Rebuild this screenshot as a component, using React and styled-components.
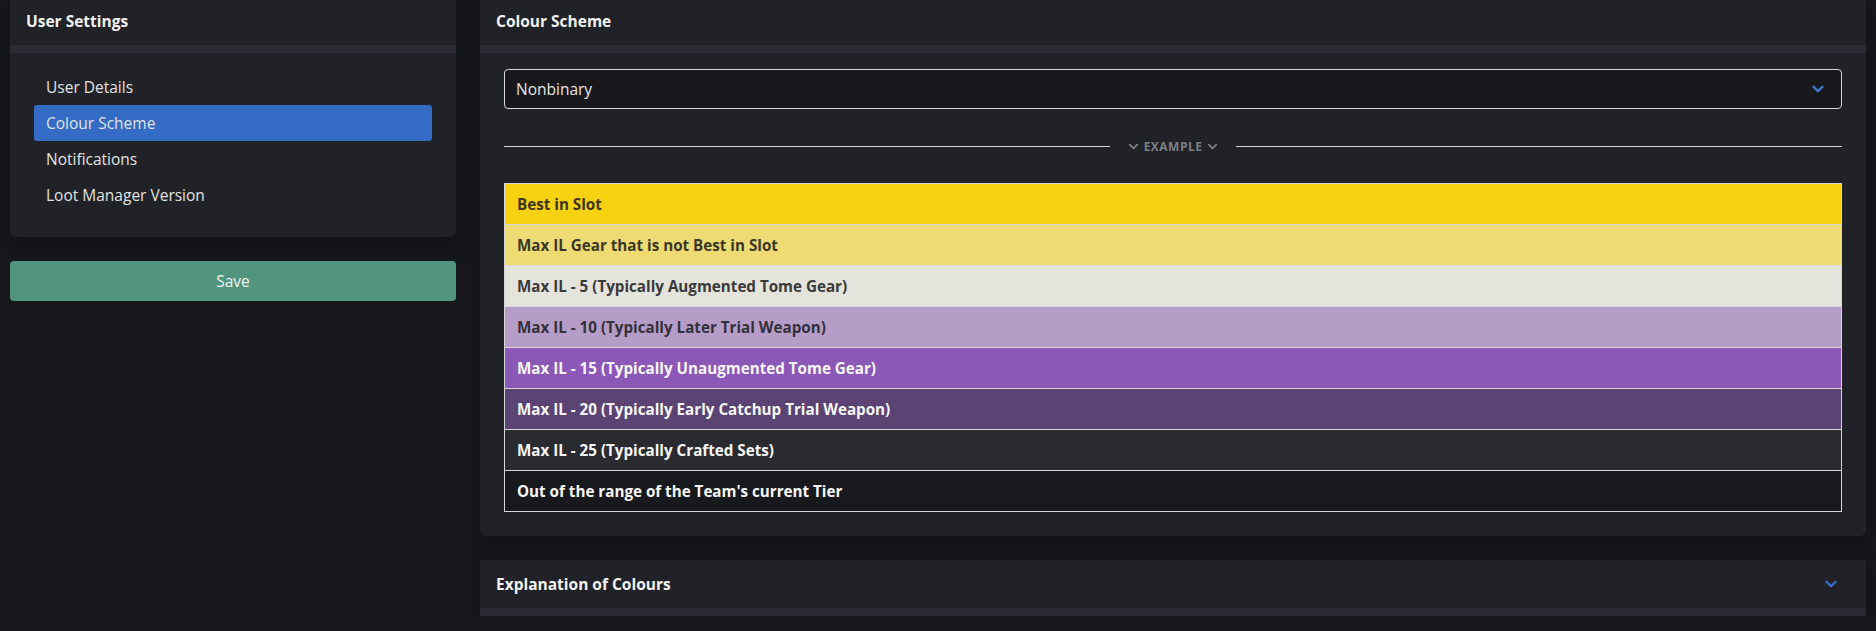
import React from "react";
import styled, { createGlobalStyle } from "styled-components";
import { ChevronDown } from "lucide-react";

const GlobalStyle = createGlobalStyle`
  html, body {
    margin: 0;
    padding: 0;
    background: #17181c;
    font-family: "Open Sans", "Noto Sans", sans-serif;
    color: #e8e8e8;
    overflow: hidden;
  }
`;

const rows = [
  { label: "Best in Slot", bg: "#f8d210", fg: "#3b3622" },
  { label: "Max IL Gear that is not Best in Slot", bg: "#eedb74", fg: "#3b3726" },
  { label: "Max IL - 5 (Typically Augmented Tome Gear)", bg: "#e4e3dc", fg: "#3a3a3a" },
  { label: "Max IL - 10 (Typically Later Trial Weapon)", bg: "#b69dc8", fg: "#34303a" },
  { label: "Max IL - 15 (Typically Unaugmented Tome Gear)", bg: "#8c58b8", fg: "#f7f7f7" },
  { label: "Max IL - 20 (Typically Early Catchup Trial Weapon)", bg: "#5b4373", fg: "#f7f7f7" },
  { label: "Max IL - 25 (Typically Crafted Sets)", bg: "#2a2b30", fg: "#f7f7f7" },
  { label: "Out of the range of the Team's current Tier", bg: "#18191d", fg: "#f7f7f7" },
];

const menu = ["User Details", "Colour Scheme", "Notifications", "Loot Manager Version"];

export default function App() {
  return (
    <>
      <GlobalStyle />
      <$Page>
        <$Sidebar>
          <$Card>
            <$CardHeader>
              <$Title>User Settings</$Title>
            </$CardHeader>
            <$MenuBody>
              <$MenuList>
                {menu.map((item) => (
                  <$MenuItem key={item} $active={item === "Colour Scheme"}>
                    {item}
                  </$MenuItem>
                ))}
              </$MenuList>
            </$MenuBody>
          </$Card>
          <$SaveButton>Save</$SaveButton>
        </$Sidebar>

        <$Main>
          <$Card>
            <$CardHeader>
              <$Title>Colour Scheme</$Title>
            </$CardHeader>
            <$CardBody>
              <$Select>
                <span>Nonbinary</span>
                <ChevronDown size={18} strokeWidth={3.2} color="#3f78d6" />
              </$Select>
              <$Divider>
                <$DividerLabel>
                  <ChevronDown size={15} strokeWidth={3} />
                  Example
                  <ChevronDown size={15} strokeWidth={3} />
                </$DividerLabel>
              </$Divider>
              <$Table>
                {rows.map((row) => (
                  <$Row key={row.label} $bg={row.bg} $fg={row.fg}>
                    {row.label}
                  </$Row>
                ))}
              </$Table>
            </$CardBody>
          </$Card>

          <$Card>
            <$CardHeader>
              <$Title>Explanation of Colours</$Title>
              <ChevronDown size={18} strokeWidth={3} color="#3a6ecb" />
            </$CardHeader>
          </$Card>
        </$Main>
      </$Page>
    </>
  );
}

// ====== Styles ======
const $Page = styled.div`
  display: grid;
  grid-template-columns: 446px 1fr;
  gap: 24px;
  padding: 0 10px;
  margin-top: -3px;
  align-items: start;
`;

const $Sidebar = styled.aside`
  display: flex;
  flex-direction: column;
  gap: 24px;
`;

const $Main = styled.main`
  display: flex;
  flex-direction: column;
  gap: 24px;
`;

const $Card = styled.section`
  background: #212227;
  border-radius: 0 0 6px 6px;
  box-shadow: 0 10px 18px rgba(8, 10, 20, 0.35);
`;

const $CardHeader = styled.header`
  height: 56px;
  box-sizing: border-box;
  padding: 0 26px 0 16px;
  display: flex;
  align-items: center;
  justify-content: space-between;
  border-bottom: 8px solid #2c2834;
`;

const $Title = styled.h2`
  margin: 0;
  font-size: 15.5px;
  font-weight: 700;
  color: #f2f2f2;
`;

const $MenuBody = styled.div`
  padding: 16px 24px 24px;
`;

const $MenuList = styled.ul`
  list-style: none;
  margin: 0;
  padding: 0;
`;

const $MenuItem = styled.li`
  height: 36px;
  display: flex;
  align-items: center;
  padding: 0 12px;
  border-radius: 3px;
  font-size: 15.5px;
  color: #e2e2e2;
  background: ${(p) => (p.$active ? "#336bc5" : "transparent")};
`;

const $SaveButton = styled.button`
  height: 40px;
  border: none;
  border-radius: 4px;
  background: #52957f;
  color: #f4f4f4;
  font-family: inherit;
  font-size: 15.5px;
`;

const $CardBody = styled.div`
  padding: 16px 24px 24px;
`;

const $Select = styled.div`
  height: 40px;
  box-sizing: border-box;
  border: 1px solid #d8d8d8;
  border-radius: 4px;
  background: #18181c;
  display: flex;
  align-items: center;
  justify-content: space-between;
  padding: 0 14px 0 11px;
  font-size: 15.5px;
  color: #e6e6e6;
`;

const $Divider = styled.div`
  margin: 24px 0;
  height: 26px;
  display: flex;
  align-items: center;
  &::before,
  &::after {
    content: "";
    flex: 1;
    height: 1px;
    background: #d6d6d6;
  }
`;

const $DividerLabel = styled.div`
  display: flex;
  align-items: center;
  gap: 3px;
  padding: 0 16px;
  font-size: 12px;
  font-weight: 700;
  letter-spacing: 0.04em;
  text-transform: uppercase;
  color: #7c7f86;
`;

const $Table = styled.div`
  border: 1px solid #d6d6d6;
  border-bottom: none;
`;

const $Row = styled.div`
  height: 41px;
  box-sizing: border-box;
  border-bottom: 1px solid #d6d6d6;
  display: flex;
  align-items: center;
  padding: 0 12px;
  font-size: 15.2px;
  font-weight: 700;
  background: ${(p) => p.$bg};
  color: ${(p) => p.$fg};
`;
